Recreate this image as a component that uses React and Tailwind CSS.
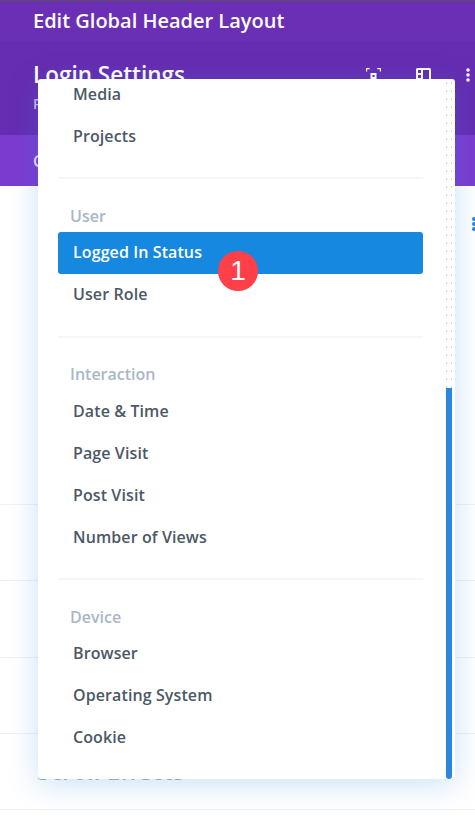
const font = { fontFamily: '"Open Sans", sans-serif' };

const Item = ({ label, active }) => (
  <div
    className={`ml-5 mr-8 flex h-[42px] items-center rounded-[3px] px-[15px] text-[16px] font-semibold tracking-[0.1px] ${
      active ? "mt-px -mb-px bg-[#1688e0] pb-0.5 text-white" : "text-[#4c5866]"
    }`}
  >
    {label}
  </div>
);

const Group = ({ title, items, active, labelClass = "pb-1" }) => (
  <div>
    <div className="ml-5 mr-8 h-0.5 bg-[#f3f6fa]" />
    <div className={`flex h-[52px] items-end pl-8 text-[16px] font-semibold leading-[22px] text-[#a9b6c9] ${labelClass}`}>
      {title}
    </div>
    {items.map((label) => (
      <Item key={label} label={label} active={label === active} />
    ))}
  </div>
);

const Row = ({ label }) => (
  <div className="flex h-[76.25px] items-center border-b border-[#eef2f7] pl-[37px] text-[24px] font-semibold text-[#9fafc4]">
    {label}
  </div>
);

export default function App() {
  return (
    <div style={font} className="relative h-[821px] w-[475px] overflow-hidden bg-white">
      {/* page behind the dropdown */}
      <div className="h-px bg-[#55505c]" />
      <div className="flex h-10 items-center bg-[#6a2fb5] pl-[33px] text-[20px] font-semibold text-white">
        Edit Global Header Layout
      </div>
      <div className="flex h-[94px] justify-between bg-[#662cb1] pl-[33px] pr-[5px] pt-[19px]">
        <div>
          <div className="text-[22.5px] font-semibold leading-[30px] text-white">Login Settings</div>
          <div className="mt-[3px] text-[14px] font-semibold text-[#cdb8ea]">Preset: Default</div>
        </div>
        <div className="flex h-[30px] items-center gap-[35px] text-white">
          <svg width="15" height="14" viewBox="0 0 15 14" fill="none" stroke="currentColor" strokeWidth="1.2">
            <path d="M.6 3.5V.6h3.2M11.2.6h3.2v2.9" />
            <rect x="4.5" y="5" width="6" height="6" fill="currentColor" stroke="none" />
            <rect x="6.5" y="7" width="2" height="2" fill="#662cb1" stroke="none" />
          </svg>
          <svg width="15" height="14" viewBox="0 0 15 14" fill="currentColor">
            <path d="M1.5 0h12A1.5 1.5 0 0 1 15 1.5V14H0V1.500A1.500 1.500 0 0 1 1.500 0ZM2 2v3h3V2Zm0 5v3h3V7Zm5-5v10h6V2Z" fillRule="evenodd" />
          </svg>
          <svg width="4" height="14" viewBox="0 0 4 14" fill="currentColor">
            <circle cx="2" cy="2" r="1.800" />
            <circle cx="2" cy="7" r="1.800" />
            <circle cx="2" cy="12" r="1.800" />
          </svg>
        </div>
      </div>
      <div className="flex h-[51px] items-center bg-[#7b3bcf] pl-[33px] text-[16px] font-semibold text-[#e6d9f7]">
        Content
      </div>
      <div className="relative h-[319px] border-b border-[#eef2f7]">
        <svg className="absolute right-0 top-[31px]" width="4" height="15" viewBox="0 0 4 15" fill="#2b87da">
          <circle cx="3" cy="2" r="2" />
          <circle cx="3" cy="7" r="2" />
          <circle cx="3" cy="12" r="2" />
        </svg>
      </div>
      <Row label="Sizing" />
      <Row label="Spacing" />
      <Row label="Border" />
      <Row label="Scroll Effects" />

      {/* dropdown */}
      <div className="absolute left-[38px] top-[79px] h-[700px] w-[417px] overflow-hidden rounded-[3px] bg-white shadow-[0_5px_30px_rgba(43,135,218,0.25)]">
        <div className="absolute right-px top-0 h-[309px] w-2.5 bg-[radial-gradient(circle,#bfdcf3_0.6px,transparent_1px)] bg-[length:5px_8px]" />
        <div className="absolute bottom-0 right-[3px] h-[391px] w-[6px] rounded-b-[3px] bg-[#2b87da]" />
        <div className="-mt-1.5">
          <Item label="Media" />
          <Item label="Projects" />
        </div>
        <div className="mt-5">
          <Group title="User" items={["Logged In Status", "User Role"]} active="Logged In Status" />
        </div>
        <div className="mt-[21px]">
          <Group
            title="Interaction"
            items={["Date & Time", "Page Visit", "Post Visit", "Number of Views"]}
            labelClass="pb-[5px]"
          />
        </div>
        <div className="mt-5">
          <Group title="Device" items={["Browser", "Operating System", "Cookie"]} />
        </div>
      </div>

      {/* step badge */}
      <div className="absolute left-[218px] top-[251px] flex h-10 w-10 items-center justify-center rounded-full bg-[#ff4049] text-[28px] leading-none text-white [font-family:'Liberation_Sans',sans-serif]">
        1
      </div>
    </div>
  );
}
